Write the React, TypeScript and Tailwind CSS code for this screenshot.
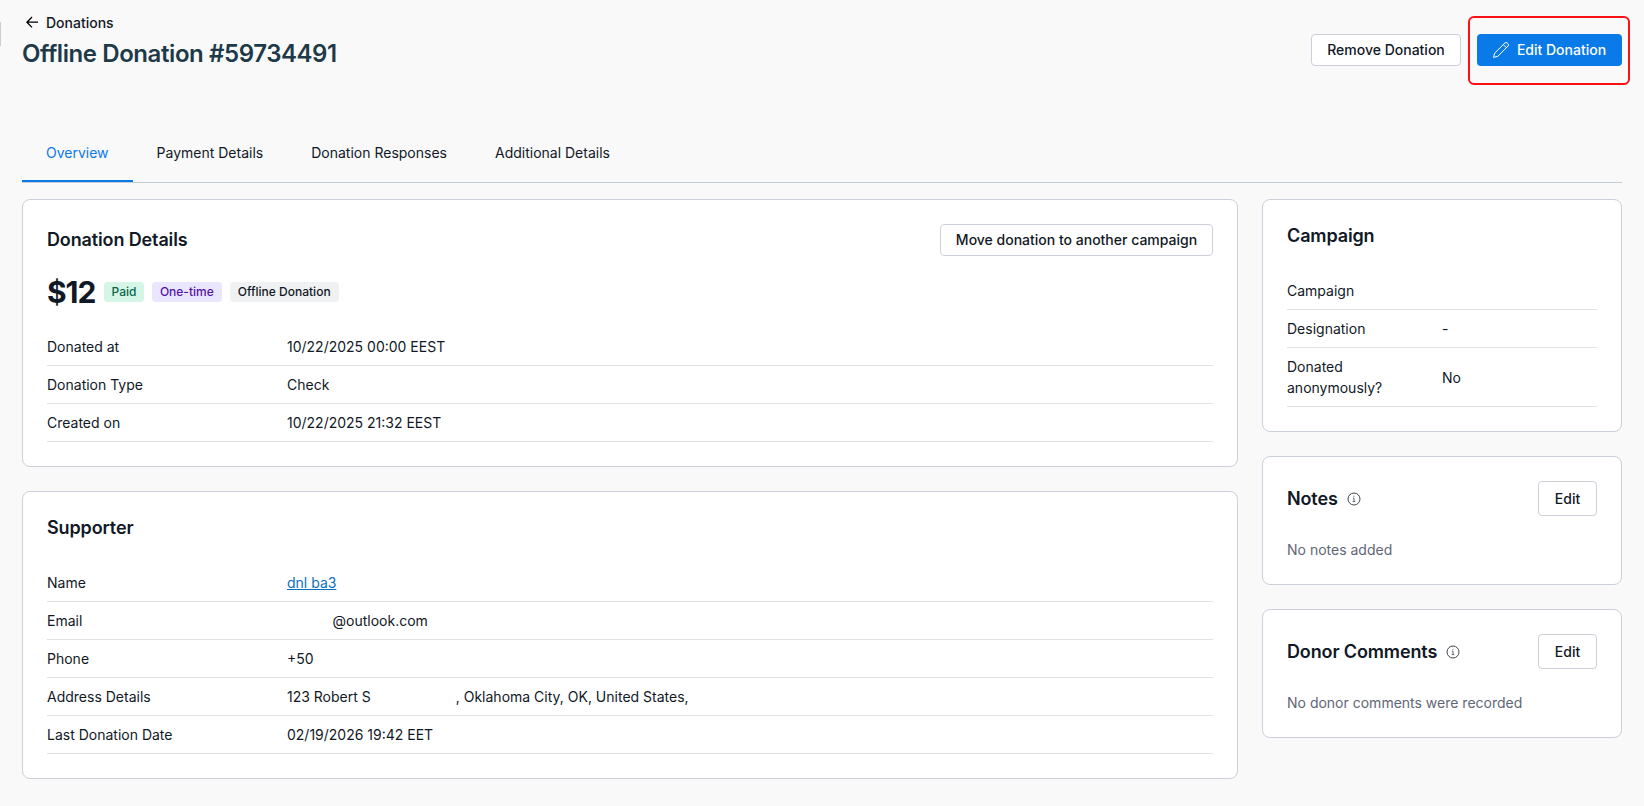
import type { ReactNode } from 'react';

const tabs = ['Overview', 'Payment Details', 'Donation Responses', 'Additional Details'];

function Card({ children }: { children: ReactNode }) {
    return <section className="rounded-lg border border-[#cbd0d9] bg-white p-6">{children}</section>;
}

function CardTitle({ children }: { children: ReactNode }) {
    return <h2 className="text-lg leading-6 font-semibold tracking-[-0.13px]">{children}</h2>;
}

function Row({ label, labelWidth = 'w-60', children }: { label: string; labelWidth?: string; children?: ReactNode }) {
    return (
        <div className="flex items-center border-b border-[#e0e2e5] py-2 text-sm leading-[21px]">
            <dt className={`${labelWidth} shrink-0`}>{label}</dt>
            <dd className="whitespace-pre">{children}</dd>
        </div>
    );
}

function InfoIcon() {
    return (
        <svg className="size-[14px]" viewBox="0 0 14 14" fill="none" stroke="#2b323c" strokeWidth="0.9">
            <circle cx="7" cy="7" r="6" />
            <path d="M6 6.1h1v3.4M5.7 9.6h2.6M6.5 4.3h.9" stroke="#4b525d" strokeWidth="0.9" />
        </svg>
    );
}

function NoteCard({ title, text }: { title: string; text: string }) {
    return (
        <Card>
            <div className="flex items-center justify-between">
                <div className="flex items-center gap-[9px]">
                    <CardTitle>{title}</CardTitle>
                    <InfoIcon />
                </div>
                <button className="h-[35px] w-[59px] rounded border border-[#cbd0d9] bg-white text-sm font-medium">Edit</button>
            </div>
            <p className="mt-6 text-sm text-[#5f6675]">{text}</p>
        </Card>
    );
}

export default function App() {
    return (
        <div className="relative min-h-[806px] bg-[#f9f9f9] px-[22px] pt-3 font-['Inter',sans-serif] text-[#111826]">
            <div className="absolute top-[22px] left-0 h-6 w-px bg-[#c9cdd6]" />

            <header className="flex h-[104px] justify-between">
                <div>
                    <a href="#" className="flex items-center gap-1 pl-1 text-sm leading-[22px] font-medium">
                        <svg className="size-4" viewBox="0 0 16 16" fill="none" stroke="#000" strokeWidth="1.3">
                            <path d="M12 7.2H.9M6 2L.9 7.2 6 12.4" />
                        </svg>
                        Donations
                    </a>
                    <h1 className="mt-[5px] text-2xl leading-[30px] font-semibold tracking-[-0.42px] text-[#1e3a49]">Offline Donation #59734491</h1>
                </div>
                <div className="flex gap-4 pt-[22px]">
                    <button className="h-8 w-[150px] rounded border border-[#cbd0d9] bg-white text-sm font-medium">Remove Donation</button>
                    <div className="relative h-8">
                        <button className="flex h-8 w-[145px] items-center justify-center gap-2 rounded bg-[#0a7ae8] text-sm font-medium text-white">
                            <svg className="size-4" viewBox="0 0 16 16" fill="none" stroke="currentColor" strokeLinejoin="round">
                                <path d="M.6 15.4l1.1-4.3L11.9 1a1.6 1.6 0 0 1 2.3 0l.8.8a1.6 1.6 0 0 1 0 2.3L4.9 14.3zM10.3 2.6l3.1 3.1" />
                            </svg>
                            Edit Donation
                        </button>
                        <div className="absolute -top-[18px] -left-[9px] h-[69px] w-[162px] rounded-md border-2 border-[#fb1016]" />
                    </div>
                </div>
            </header>

            <nav className="mb-4 flex h-[67px] border-b border-[#c5cdd6] text-sm">
                {tabs.map((tab, i) => (
                    <a
                        key={tab}
                        href="#"
                        className={`px-6 pt-[27px] ${i === 0 ? 'border-b-2 border-[#0a7ae8] text-[#0a7ae8]' : ''}`}
                    >
                        {tab}
                    </a>
                ))}
            </nav>

            <main className="flex items-start gap-6">
                <div className="flex flex-1 flex-col gap-6">
                    <Card>
                        <div className="flex items-center justify-between">
                            <CardTitle>Donation Details</CardTitle>
                            <button className="h-8 w-[273px] rounded border border-[#cbd0d9] bg-white text-sm font-medium">Move donation to another campaign</button>
                        </div>
                        <div className="my-4 flex h-10 items-center gap-2 text-xs leading-5 font-medium">
                            <span className="w-[49px] text-3xl leading-10 font-bold tracking-[-1.1px]">$12</span>
                            <span className="rounded bg-[#d5f5e7] px-[7.5px] text-[#08664a]">Paid</span>
                            <span className="rounded bg-[#eae6fd] px-2 text-[#5216a8]">One-time</span>
                            <span className="rounded bg-[#f0f1f3] px-2">Offline Donation</span>
                        </div>
                        <dl>
                            <Row label="Donated at">10/22/2025 00:00 EEST</Row>
                            <Row label="Donation Type">Check</Row>
                            <Row label="Created on">10/22/2025 21:32 EEST</Row>
                        </dl>
                    </Card>

                    <Card>
                        <div className="mb-6"><CardTitle>Supporter</CardTitle></div>
                        <dl>
                            <Row label="Name"><a href="#" className="text-[#0b6fc2] underline">dnl ba3</a></Row>
                            <Row label="Email"><span className="pl-[45.5px]">@outlook.com</span></Row>
                            <Row label="Phone">+50</Row>
                            <Row label="Address Details">123 Robert S<span className="pl-[85px]">, Oklahoma City, OK, United States,</span></Row>
                            <Row label="Last Donation Date">02/19/2026 19:42 EET</Row>
                        </dl>
                    </Card>
                </div>

                <aside className="flex w-[360px] flex-col gap-6">
                    <Card>
                        <div className="mb-6"><CardTitle>Campaign</CardTitle></div>
                        <dl>
                            <Row label="Campaign" labelWidth="w-1/2" />
                            <Row label="Designation" labelWidth="w-1/2">-</Row>
                            <Row label="Donated anonymously?" labelWidth="w-1/2 pr-8">No</Row>
                        </dl>
                    </Card>
                    <NoteCard title="Notes" text="No notes added" />
                    <NoteCard title="Donor Comments" text="No donor comments were recorded" />
                </aside>
            </main>
        </div>
    );
}
